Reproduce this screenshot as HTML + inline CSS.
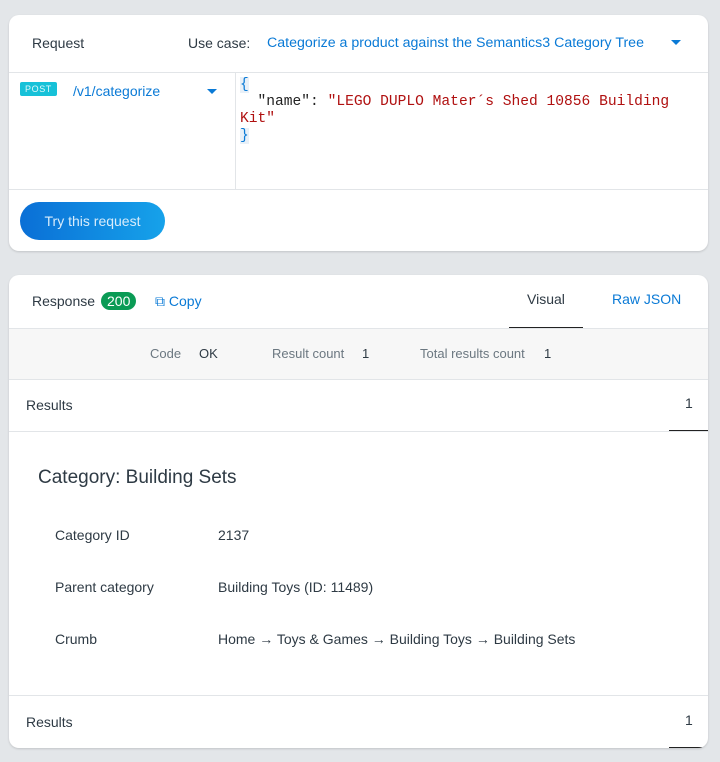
<!DOCTYPE html>
<html><head><style>
body{margin:0;width:720px;height:762px;background:#e3e6e9;font-family:"Liberation Sans",sans-serif;font-size:14px;color:#2e3a44;position:relative;overflow:hidden}
.card{position:absolute;left:9px;width:699px;background:#fff;border-radius:10px;box-shadow:0 1px 2px rgba(0,0,0,.15)}
.a{position:absolute;white-space:nowrap}
.blue{color:#0a7ad6}
.hr{position:absolute;left:0;right:0;height:1px;background:#e2e5e8}
</style></head><body>
<div class="card" style="top:15px;height:236px">
  <div class="a" style="left:23px;top:20px">Request</div>
  <div class="a" style="left:179px;top:20px">Use case:</div>
  <div class="a blue" style="left:258px;top:20px;font-size:14.2px">Categorize a product against the Semantics3 Category Tree</div>
  <div class="a" style="left:662px;top:25px;width:0;height:0;border-left:5px solid transparent;border-right:5px solid transparent;border-top:5px solid #0a7ad6"></div>
  <div class="hr" style="top:57px"></div>
  <div class="hr" style="top:174px"></div>
  <div class="a" style="left:226px;top:57px;width:1px;height:117px;background:#e2e5e8"></div>
  <div class="a" style="left:11px;top:67px;background:#17c1d8;color:#dff8fb;font-size:9px;line-height:12px;padding:1px 5px;border-radius:2px;letter-spacing:.6px">POST</div>
  <div class="a blue" style="left:64px;top:68px">/v1/categorize</div>
  <div class="a" style="left:198px;top:74px;width:0;height:0;border-left:5px solid transparent;border-right:5px solid transparent;border-top:5px solid #0a7ad6"></div>
  <div class="a" style="left:231px;top:62px;font-family:'Liberation Mono',monospace;font-size:14.6px;line-height:17px;white-space:pre;color:#222"><span style="color:#0a7ad6;background:#e8f0f8">{</span>
  "name": <span style="color:#b01010">"LEGO DUPLO Mater´s Shed 10856 Building</span>
<span style="color:#b01010">Kit"</span>
<span style="color:#0a7ad6;background:#e8f0f8">}</span></div>
  <div class="a" style="left:11px;top:187px;width:145px;height:38px;border-radius:19px;background:linear-gradient(90deg,#0a6fd6,#16a2ea);color:#d8ecfb;text-align:center;line-height:38px">Try this request</div>
</div>
<div class="card" style="top:275px;height:473px;overflow:hidden">
  <div class="a" style="left:23px;top:18px">Response</div>
  <div class="a" style="left:92px;top:17px;background:#0a9b55;color:#fff;border-radius:9px;padding:1px 6px;font-size:14px">200</div>
  <div class="a blue" style="left:146px;top:18px">⧉ Copy</div>
  <div class="a" style="left:518px;top:16px">Visual</div>
  <div class="a" style="left:500px;top:52px;width:74px;height:1px;background:#222"></div>
  <div class="a blue" style="left:603px;top:16px">Raw JSON</div>
  <div class="a" style="left:0;right:0;top:53px;height:50px;background:#f7f7f7;border-top:1px solid #e2e5e8;border-bottom:1px solid #e2e5e8"></div>
  <div class="a" style="left:141px;top:71px;font-size:13px;color:#6b7780">Code</div>
  <div class="a" style="left:190px;top:71px;font-size:13px">OK</div>
  <div class="a" style="left:263px;top:71px;font-size:13px;color:#6b7780">Result count</div>
  <div class="a" style="left:353px;top:71px;font-size:13px">1</div>
  <div class="a" style="left:411px;top:71px;font-size:13px;color:#6b7780">Total results count</div>
  <div class="a" style="left:535px;top:71px;font-size:13px">1</div>
  <div class="a" style="left:17px;top:122px">Results</div>
  <div class="a" style="left:676px;top:120px">1</div>
  <div class="a" style="left:660px;top:155px;width:39px;height:1px;background:#222"></div>
  <div class="hr" style="top:156px"></div>
  <div class="a" style="left:29px;top:192px;font-size:19px">Category: Building Sets</div>
  <div class="a" style="left:46px;top:252px">Category ID</div>
  <div class="a" style="left:209px;top:252px">2137</div>
  <div class="a" style="left:46px;top:304px">Parent category</div>
  <div class="a" style="left:209px;top:304px">Building Toys (ID: 11489)</div>
  <div class="a" style="left:46px;top:356px">Crumb</div>
  <div class="a" style="left:209px;top:356px">Home <b>→</b> Toys &amp; Games <b>→</b> Building Toys <b>→</b> Building Sets</div>
  <div class="hr" style="top:420px"></div>
  <div class="a" style="left:17px;top:439px">Results</div>
  <div class="a" style="left:676px;top:437px">1</div>
  <div class="a" style="left:660px;top:472px;width:39px;height:1px;background:#222"></div>
</div>
</body></html>
